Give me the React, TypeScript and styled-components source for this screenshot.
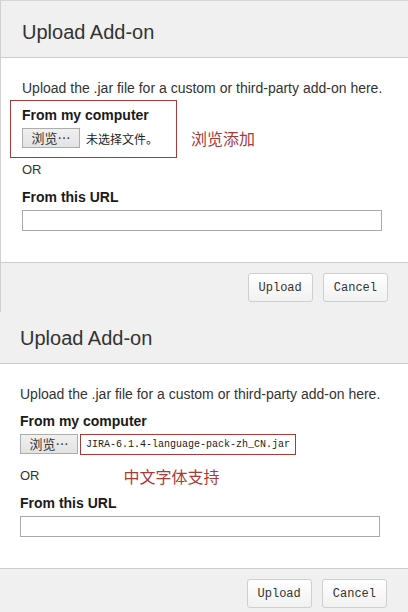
import React from 'react';
import styled, { createGlobalStyle, css } from 'styled-components';

const GlobalStyle = createGlobalStyle`
  html, body {
    margin: 0;
    padding: 0;
    background: #FFFFFF;
  }
  body {
    font-family: "Liberation Sans", Arial, "Noto Sans CJK SC", sans-serif;
    color: #333333;
  }
`;

const NOTE_RED = '#a83a3a';
const CJK = `"Noto Sans CJK SC", "Liberation Sans", sans-serif`;

const Page = styled.div`
  width: 408px;
  height: 612px;
  overflow: hidden;
  display: flex;
  flex-direction: column;
`;

const Dialog = styled.section<{ $framed?: boolean; $height?: number }>`
  flex: 0 0 auto;
  ${p => p.$height && css`height: ${p.$height}px;`}
  overflow: hidden;
  border-top: ${p => (p.$framed ? '1px solid #d6d6d6' : '0')};
  border-left: ${p => (p.$framed ? '1px solid #d0d0d0' : '0')};
  background: #f0f0f0;
`;

const Header = styled.header<{ $top: number; $left: number }>`
  box-sizing: border-box;
  padding: ${p => p.$top}px 20px 13px ${p => p.$left}px;
  background: #f0f0f0;
  border-bottom: 1px solid #cccccc;
`;

const Title = styled.h2`
  margin: 0;
  font-family: "Liberation Sans", Arial, sans-serif;
  font-weight: 400;
  font-size: 20px;
  line-height: 24px;
  color: #333333;
`;

const Body = styled.div<{ $left: number; $right: number }>`
  background: #FFFFFF;
  padding: 20px ${p => p.$right}px 31px ${p => p.$left}px;
`;

const Intro = styled.p`
  margin: 0;
  font-size: 14px;
  line-height: 20px;
  color: #333333;
  white-space: nowrap;
`;

const SourceGroup = styled.div<{ $marked?: boolean }>`
  position: relative;
  margin-top: 7px;
  ${p =>
    p.$marked &&
    css`
      width: fit-content;
      margin: 2px 0 -10px -12px;
      padding: 4px 18px 9px 11px;
      border: 1px solid ${NOTE_RED};
    `}
`;

const FieldLabel = styled.div<{ $gap?: number }>`
  margin-top: ${p => p.$gap ?? 0}px;
  font-size: 14px;
  font-weight: 700;
  line-height: 20px;
  color: #1a1a1a;
`;

const FileRow = styled.div`
  display: flex;
  align-items: center;
  height: 20px;
  margin-top: 3px;
`;

const BrowseButton = styled.button`
  box-sizing: border-box;
  height: 20px;
  width: 58px;
  padding: 0;
  border: 1px solid #adadad;
  background: linear-gradient(#f0f0f0, #e3e3e3);
  font-family: ${CJK};
  font-size: 13px;
  line-height: 18px;
  color: #333333;
`;

const NoFile = styled.span`
  margin-left: 6px;
  font-family: ${CJK};
  font-size: 12px;
  color: #222222;
`;

const FileName = styled.span<{ $marked?: boolean }>`
  box-sizing: border-box;
  display: inline-flex;
  align-items: center;
  height: 21px;
  margin-left: 2px;
  padding: 0 5px;
  border: 1px solid ${p => (p.$marked ? NOTE_RED : 'transparent')};
  font-family: "Liberation Mono", "Courier New", monospace;
  font-size: 10px;
  color: #222222;
`;

const Note = styled.span`
  font-family: ${CJK};
  font-size: 16px;
  line-height: 20px;
  color: ${NOTE_RED};
  white-space: nowrap;
`;

const SideNote = styled(Note)`
  position: absolute;
  left: calc(100% + 15px);
  bottom: 9px;
`;

const OrRow = styled.div`
  display: flex;
  align-items: center;
  margin-top: 12px;
  font-size: 13px;
  line-height: 20px;
  color: #333333;
`;

const OrNote = styled(Note)`
  margin-left: 84px;
`;

const UrlInput = styled.input`
  display: block;
  box-sizing: border-box;
  width: 100%;
  height: 21px;
  margin: 3px 0 0;
  border: 1px solid #a9a9a9;
  background: #FFFFFF;
`;

const Footer = styled.footer<{ $right: number }>`
  display: flex;
  justify-content: flex-end;
  gap: 10px;
  padding: 10px ${p => p.$right}px 10px 20px;
  background: #f0f0f0;
  border-top: 1px solid #cccccc;
`;

const ActionButton = styled.button`
  box-sizing: border-box;
  height: 29px;
  padding: 0 10px;
  border: 1px solid #cfcfcf;
  border-radius: 3px;
  background: linear-gradient(#ffffff, #f1f1f1);
  font-family: "Liberation Mono", "Courier New", monospace;
  font-size: 12px;
  color: #333333;
  cursor: pointer;
`;

interface UploadDialogProps {
  framed?: boolean;
  height?: number;
  headerTop: number;
  left: number;
  right: number;
  footerRight: number;
  fileName?: string;
  browseNote?: string;
  orNote?: string;
}

const UploadDialog: React.FC<UploadDialogProps> = ({
  framed,
  height,
  headerTop,
  left,
  right,
  footerRight,
  fileName,
  browseNote,
  orNote,
}) => (
  <Dialog $framed={framed} $height={height}>
    <Header $top={headerTop} $left={left}>
      <Title>Upload Add-on</Title>
    </Header>
    <Body $left={left} $right={right}>
      <Intro>Upload the .jar file for a custom or third-party add-on here.</Intro>
      <SourceGroup $marked={!!browseNote}>
        <FieldLabel>From my computer</FieldLabel>
        <FileRow>
          <BrowseButton type="button">浏览…</BrowseButton>
          {fileName ? (
            <FileName $marked>{fileName}</FileName>
          ) : (
            <NoFile>未选择文件。</NoFile>
          )}
        </FileRow>
        {browseNote && <SideNote>{browseNote}</SideNote>}
      </SourceGroup>
      <OrRow>
        OR
        {orNote && <OrNote>{orNote}</OrNote>}
      </OrRow>
      <FieldLabel $gap={7}>From this URL</FieldLabel>
      <UrlInput type="text" />
    </Body>
    <Footer $right={footerRight}>
      <ActionButton type="button">Upload</ActionButton>
      <ActionButton type="button">Cancel</ActionButton>
    </Footer>
  </Dialog>
);

const App: React.FC = () => (
  <>
    <GlobalStyle />
    <Page>
      <UploadDialog
        framed
        height={311}
        headerTop={19}
        left={21}
        right={26}
        footerRight={20}
        browseNote="浏览添加"
      />
      <UploadDialog
        headerTop={14}
        left={20}
        right={28}
        footerRight={21}
        fileName="JIRA-6.1.4-language-pack-zh_CN.jar"
        orNote="中文字体支持"
      />
    </Page>
  </>
);

export default App;
